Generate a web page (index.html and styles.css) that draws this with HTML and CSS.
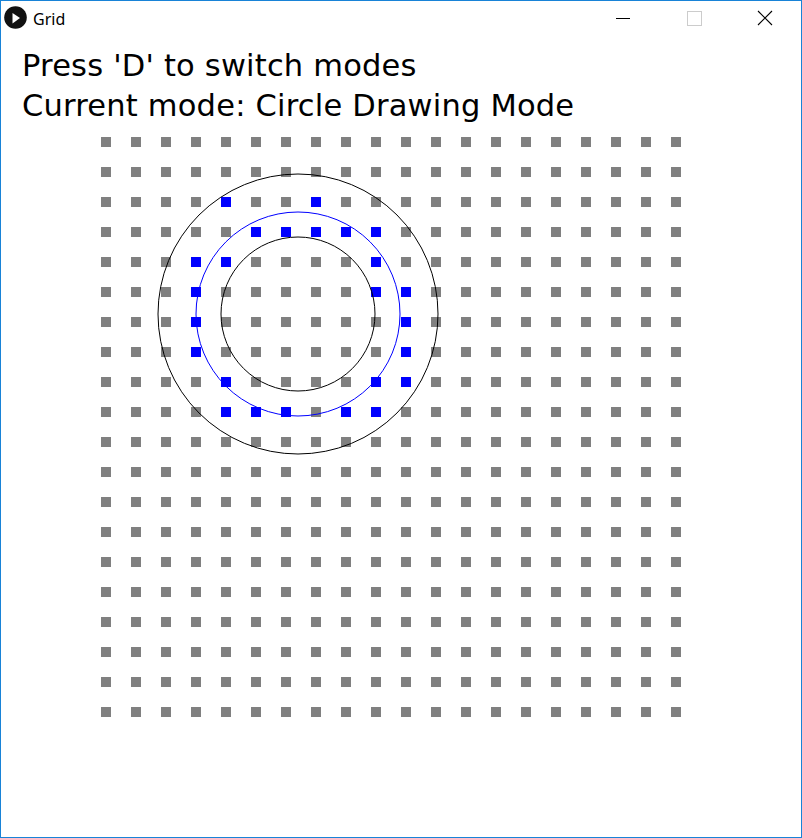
FILE: index.html
```html
<!DOCTYPE html>
<html>
<head>
<meta charset="utf-8">
<title>Grid</title>
<link rel="stylesheet" href="styles.css">
</head>
<body>
<div class="window">
  <div class="titlebar">
    <svg class="app-icon" width="24" height="24" viewBox="0 0 24 24">
      <circle cx="11.5" cy="11.5" r="11.3" fill="#111"/>
      <polygon points="8.5,7 16,12 8.5,17.5" fill="#fff"/>
    </svg>
    <span class="title">Grid</span>
    <span class="spacer"></span>
    <span class="btn">
      <svg width="16" height="16" viewBox="0 0 16 16"><line x1="1" y1="8.5" x2="15" y2="8.5" stroke="#000" stroke-width="1"/></svg>
    </span>
    <span class="btn">
      <svg width="16" height="16" viewBox="0 0 16 16"><rect x="1.5" y="1.5" width="14" height="14" fill="none" stroke="#ccc" stroke-width="1"/></svg>
    </span>
    <span class="btn">
      <svg width="16" height="16" viewBox="0 0 16 16"><path d="M1 1 L15 15 M15 1 L1 15" stroke="#000" stroke-width="1.1" fill="none"/></svg>
    </span>
  </div>
  <div class="canvas">
    <div class="info">
      <div>Press 'D' to switch modes</div>
      <div>Current mode: Circle Drawing Mode</div>
    </div>
    <div class="grid">
      <i></i><i></i><i></i><i></i><i></i> <i></i><i></i><i></i><i></i><i></i> <i></i><i></i><i></i><i></i><i></i> <i></i><i></i><i></i><i></i><i></i>
      <i></i><i></i><i></i><i></i><i></i> <i></i><i></i><i></i><i></i><i></i> <i></i><i></i><i></i><i></i><i></i> <i></i><i></i><i></i><i></i><i></i>
      <i></i><i></i><i></i><i></i><i class="on"></i> <i></i><i></i><i class="on"></i><i></i><i></i> <i></i><i></i><i></i><i></i><i></i> <i></i><i></i><i></i><i></i><i></i>
      <i></i><i></i><i></i><i></i><i></i> <i class="on"></i><i class="on"></i><i class="on"></i><i class="on"></i><i class="on"></i> <i></i><i></i><i></i><i></i><i></i> <i></i><i></i><i></i><i></i><i></i>
      <i></i><i></i><i></i><i class="on"></i><i class="on"></i> <i></i><i></i><i></i><i></i><i class="on"></i> <i></i><i></i><i></i><i></i><i></i> <i></i><i></i><i></i><i></i><i></i>
      <i></i><i></i><i></i><i class="on"></i><i></i> <i></i><i></i><i></i><i></i><i class="on"></i> <i class="on"></i><i></i><i></i><i></i><i></i> <i></i><i></i><i></i><i></i><i></i>
      <i></i><i></i><i></i><i class="on"></i><i></i> <i></i><i></i><i></i><i></i><i></i> <i class="on"></i><i></i><i></i><i></i><i></i> <i></i><i></i><i></i><i></i><i></i>
      <i></i><i></i><i></i><i class="on"></i><i></i> <i></i><i></i><i></i><i></i><i></i> <i class="on"></i><i></i><i></i><i></i><i></i> <i></i><i></i><i></i><i></i><i></i>
      <i></i><i></i><i></i><i></i><i class="on"></i> <i></i><i></i><i></i><i></i><i class="on"></i> <i class="on"></i><i></i><i></i><i></i><i></i> <i></i><i></i><i></i><i></i><i></i>
      <i></i><i></i><i></i><i></i><i class="on"></i> <i class="on"></i><i class="on"></i><i></i><i class="on"></i><i class="on"></i> <i></i><i></i><i></i><i></i><i></i> <i></i><i></i><i></i><i></i><i></i>
      <i></i><i></i><i></i><i></i><i></i> <i></i><i></i><i></i><i></i><i></i> <i></i><i></i><i></i><i></i><i></i> <i></i><i></i><i></i><i></i><i></i>
      <i></i><i></i><i></i><i></i><i></i> <i></i><i></i><i></i><i></i><i></i> <i></i><i></i><i></i><i></i><i></i> <i></i><i></i><i></i><i></i><i></i>
      <i></i><i></i><i></i><i></i><i></i> <i></i><i></i><i></i><i></i><i></i> <i></i><i></i><i></i><i></i><i></i> <i></i><i></i><i></i><i></i><i></i>
      <i></i><i></i><i></i><i></i><i></i> <i></i><i></i><i></i><i></i><i></i> <i></i><i></i><i></i><i></i><i></i> <i></i><i></i><i></i><i></i><i></i>
      <i></i><i></i><i></i><i></i><i></i> <i></i><i></i><i></i><i></i><i></i> <i></i><i></i><i></i><i></i><i></i> <i></i><i></i><i></i><i></i><i></i>
      <i></i><i></i><i></i><i></i><i></i> <i></i><i></i><i></i><i></i><i></i> <i></i><i></i><i></i><i></i><i></i> <i></i><i></i><i></i><i></i><i></i>
      <i></i><i></i><i></i><i></i><i></i> <i></i><i></i><i></i><i></i><i></i> <i></i><i></i><i></i><i></i><i></i> <i></i><i></i><i></i><i></i><i></i>
      <i></i><i></i><i></i><i></i><i></i> <i></i><i></i><i></i><i></i><i></i> <i></i><i></i><i></i><i></i><i></i> <i></i><i></i><i></i><i></i><i></i>
      <i></i><i></i><i></i><i></i><i></i> <i></i><i></i><i></i><i></i><i></i> <i></i><i></i><i></i><i></i><i></i> <i></i><i></i><i></i><i></i><i></i>
      <i></i><i></i><i></i><i></i><i></i> <i></i><i></i><i></i><i></i><i></i> <i></i><i></i><i></i><i></i><i></i> <i></i><i></i><i></i><i></i><i></i>
    </div>
    <svg class="overlay" width="800" height="806" viewBox="0 0 800 806">
      <circle cx="297" cy="283" r="140" fill="none" stroke="#000" stroke-width="1"/>
      <circle cx="297" cy="283" r="102" fill="none" stroke="#0000ff" stroke-width="1"/>
      <circle cx="297" cy="283" r="77" fill="none" stroke="#000" stroke-width="1"/>
    </svg>
  </div>
</div>
</body>
</html>
```

FILE: styles.css
```css
html, body {
  margin: 0;
  padding: 0;
  background: #fff;
}

.window {
  box-sizing: border-box;
  width: 802px;
  height: 838px;
  border: 1px solid #1883d7;
  background: #fff;
  display: flex;
  flex-direction: column;
}

.titlebar {
  height: 30px;
  display: flex;
  align-items: center;
  flex: none;
}

.app-icon {
  margin-left: 3px;
  margin-top: 4px;
  flex: none;
}

.title {
  margin-left: 5px;
  font-family: "Noto Sans", "Open Sans", sans-serif;
  font-size: 16px;
  color: #000;
  margin-top: 5px;
}

.spacer {
  flex: 1;
}

.btn {
  width: 71px;
  height: 30px;
  display: flex;
  align-items: center;
  justify-content: center;
}

.btn svg {
  display: block;
  margin-top: 3px;
}

.btn:last-child {
  width: 72px;
}

.canvas {
  position: relative;
  flex: 1;
  padding-top: 15px;
}

.info {
  padding-left: 21px;
  font-family: "DejaVu Sans", Verdana, sans-serif;
  font-size: 30.5px;
  letter-spacing: 0.2px;
  line-height: 40px;
  color: #000;
}

.grid {
  margin-top: 11px;
  margin-left: 100px;
  display: grid;
  grid-template-columns: repeat(20, 10px);
  grid-auto-rows: 10px;
  gap: 20px;
}

.grid i {
  display: block;
  width: 10px;
  height: 10px;
  background: #808080;
}

.grid i.on {
  background: #0000ff;
}

.overlay {
  position: absolute;
  left: 0;
  top: 0;
  pointer-events: none;
}
```
